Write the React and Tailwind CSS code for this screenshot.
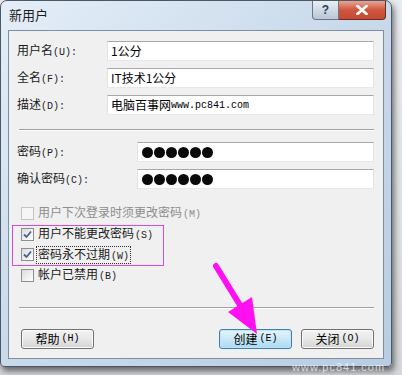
import React from "react";

const cjk = { fontFamily: '"Noto Sans CJK SC", "Noto Sans", sans-serif' };
const mono = { fontFamily: '"Liberation Mono", "DejaVu Sans Mono", monospace' };

function Label({ cn, key2, w }) {
  return (
    <div className={`flex items-baseline text-[12px] text-[#1a1a1a] leading-none ${w}`} style={cjk}>
      <span>{cn}</span>
      <span className="text-[10px]" style={mono}>{key2}</span>
    </div>
  );
}

function Field({ children, className = "" }) {
  return (
    <div className={`h-[20px] flex-1 bg-white border-t border-t-[#a8a8a8] border-l border-l-[#e2e2e2] border-r border-r-[#e2e2e2] border-b border-b-[#e8e8e8] flex items-center pl-[3px] text-[12px] text-black ${className}`} style={cjk}>
      {children}
    </div>
  );
}

function Dots() {
  return (
    <div className="flex gap-[1px] pl-[1px]">
      {[0, 1, 2, 3, 4, 5].map((i) => (
        <div key={i} className="w-[11px] h-[11px] rounded-full bg-[#0a0a0a]" />
      ))}
    </div>
  );
}

function Check({ checked, disabled, cn, key2, focus }) {
  return (
    <div className="flex items-center h-[20.7px]">
      <div className={`w-[13px] h-[13px] border ${disabled ? "border-[#c4c4c4] bg-[#f6f6f6]" : "border-[#8e8f8f] bg-gradient-to-br from-[#dcdcdc] to-[#ffffff]"} flex items-center justify-center`}>
        {checked && (
          <svg width="9" height="9" viewBox="0 0 9 9">
            <path d="M1 4.5 L3.5 7 L8 1.5" fill="none" stroke="#4a5f97" strokeWidth="1.8" />
          </svg>
        )}
      </div>
      <div className={`ml-[3px] flex items-baseline text-[12px] leading-none px-[1px] py-[1px] ${disabled ? "text-[#8d8d8d]" : "text-[#1a1a1a]"} ${focus ? "outline outline-1 outline-dotted outline-[#333]" : ""}`} style={cjk}>
        <span>{cn}</span>
        <span className="text-[10px] ml-[1px]" style={mono}>{key2}</span>
      </div>
    </div>
  );
}

function Btn({ cn, key2, primary }) {
  return (
    <div className={`w-[73px] h-[20px] rounded-[3px] border flex items-center justify-center text-[12px] leading-none ${primary ? "border-[#3c7fb1] bg-gradient-to-b from-[#e6f4fc] via-[#c9e8f8] to-[#a9d9f2] shadow-[inset_0_0_0_1px_#bfe4f6]" : "border-[#707070] bg-gradient-to-b from-[#f3f3f3] via-[#e7e7e7] to-[#d4d4d4] shadow-[inset_0_0_0_1px_#fbfbfb]"}`} style={cjk}>
      <span>{cn}</span>
      <span className="text-[10px] ml-[2px]" style={mono}>{key2}</span>
    </div>
  );
}

export default function App() {
  return (
    <div className="w-[402px] h-[375px] relative overflow-hidden bg-gradient-to-b from-[#e9ecef] to-[#d5d7da]">
      <div className="w-[392px] h-[367px] rounded-t-[7px] rounded-b-[4px] border border-[#4d5866] bg-gradient-to-br from-[#e4eef8] via-[#c8d9ea] to-[#b9cde2] flex flex-col px-[7px] pb-[7px] shadow-[2px_4px_6px_rgba(0,0,0,0.55)]">
        <div className="h-[29px] flex items-start justify-between">
          <div className="pt-[7px] pl-[1px] text-[13px] text-[#1c1c1c] leading-none" style={cjk}>新用户</div>
          <div className="flex -mr-[2px]">
            <div className="w-[27px] h-[19px] rounded-bl-[4px] border border-t-0 border-[#6a7788] bg-gradient-to-b from-[#e9eef4] to-[#b8c6d6] flex items-center justify-center text-[12px] font-bold text-[#2e3d52]" style={{ fontFamily: '"Liberation Sans", sans-serif' }}>?</div>
            <div className="w-[47px] h-[19px] rounded-br-[4px] border border-t-0 border-l-0 border-[#6b2a22] bg-gradient-to-b from-[#e8a493] via-[#d0553f] to-[#c44a33] flex items-center justify-center">
              <svg width="12" height="10" viewBox="0 0 12 10">
                <path d="M1.5 1 L10.5 9 M10.5 1 L1.5 9" stroke="#ffffff" strokeWidth="2.6" strokeLinecap="square" />
              </svg>
            </div>
          </div>
        </div>
        <div className="flex-1 bg-[#f0f0f0] border border-[#7d8fa3] flex flex-col pl-[8px] pr-[9px]">
          <div className="mt-[10px] flex flex-col gap-[7px]">
            <div className="flex items-center">
              <Label cn="用户名" key2="(U):" w="w-[90px]" />
              <Field><span>1公分</span></Field>
            </div>
            <div className="flex items-center">
              <Label cn="全名" key2="(F):" w="w-[90px]" />
              <Field><span>IT技术1公分</span></Field>
            </div>
            <div className="flex items-center">
              <Label cn="描述" key2="(D):" w="w-[90px]" />
              <Field><span>电脑百事网</span><span className="text-[10px]" style={mono}>www.pc841.com</span></Field>
            </div>
          </div>
          <div className="mt-[14px] ml-[2px] h-[2px] border-t border-t-[#a0a0a0] border-b border-b-white" />
          <div className="mt-[11px] flex flex-col gap-[7px]">
            <div className="flex items-center">
              <Label cn="密码" key2="(P):" w="w-[120px]" />
              <Field><Dots /></Field>
            </div>
            <div className="flex items-center">
              <Label cn="确认密码" key2="(C):" w="w-[120px]" />
              <Field><Dots /></Field>
            </div>
          </div>
          <div className="mt-[14px] ml-[4px] flex flex-col">
            <Check disabled cn="用户下次登录时须更改密码" key2="(M)" />
            <Check checked cn="用户不能更改密码" key2="(S)" />
            <Check checked focus cn="密码永不过期" key2="(W)" />
            <Check cn="帐户已禁用" key2="(B)" />
          </div>
          <div className="mt-[21px] ml-[2px] h-[2px] border-t border-t-[#a0a0a0] border-b border-b-white" />
          <div className="mt-[20px] flex items-center ml-[4px]">
            <Btn cn="帮助" key2="(H)" />
            <div className="flex-1" />
            <Btn primary cn="创建" key2="(E)" />
            <div className="w-[9px]" />
            <Btn cn="关闭" key2="(O)" />
          </div>
        </div>
      </div>

      <div className="absolute left-[12px] top-[225px] w-[152px] h-[41px] border border-[#d84ad8]" />
      <svg className="absolute left-0 top-0 pointer-events-none" width="402" height="375" viewBox="0 0 402 375">
        <line x1="216" y1="266" x2="243" y2="310" stroke="#ff10f0" strokeWidth="6" strokeLinecap="round" />
        <polygon points="257,334 228,312 252,297" fill="#ff10f0" />
      </svg>
      <div className="absolute left-[292px] top-[362px] text-[11px] text-white/70 leading-none tracking-[1px]" style={{ fontFamily: '"Liberation Sans", sans-serif' }}>www.pc841.com</div>
    </div>
  );
}
